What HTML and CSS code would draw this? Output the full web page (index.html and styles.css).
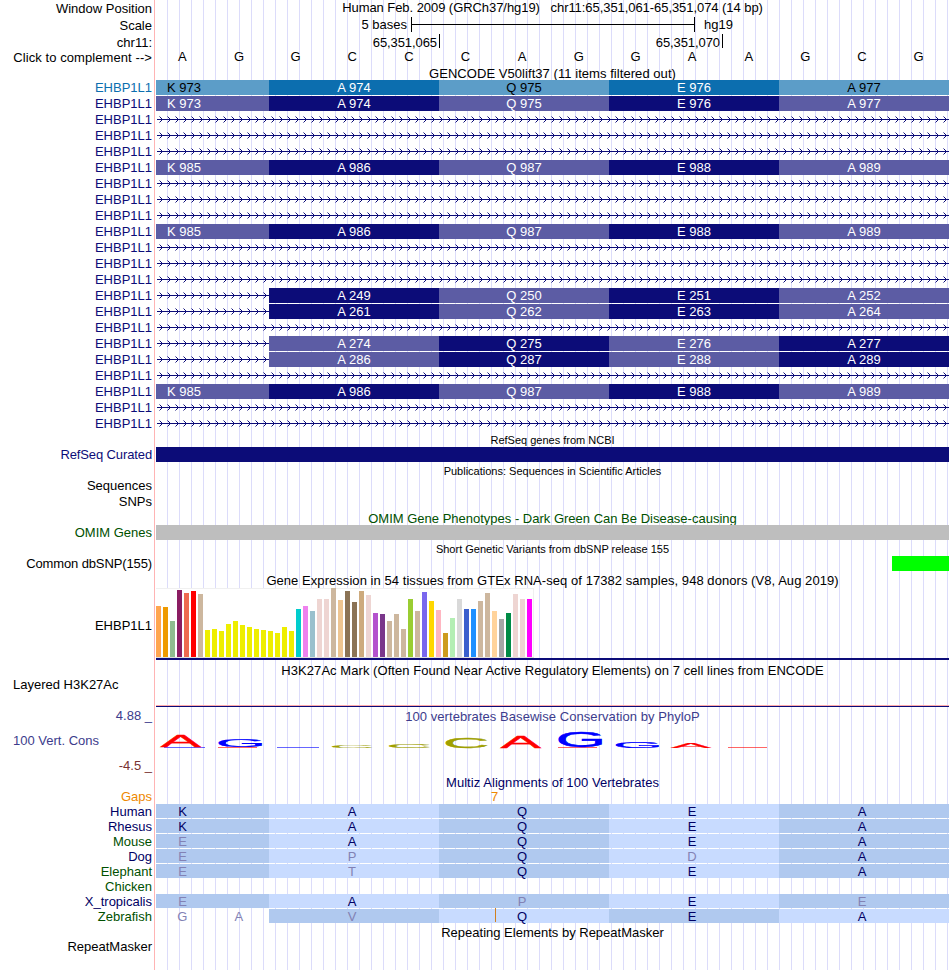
FILE: index.html
```html
<!DOCTYPE html>
<html lang="en">
<head>
<meta charset="utf-8">
<title>Human hg19 chr11:65,351,061-65,351,074</title>
<link rel="stylesheet" href="styles.css">
</head>
<body>
<svg class="defs" width="0" height="0" aria-hidden="true">
  <defs>
    <pattern id="chevrons" x="0" y="0" width="8" height="15" patternUnits="userSpaceOnUse">
      <path class="chev-tip" d="M3 5h1v1h-1zM4 6h1v1h-1zM5 7h1v1h-1zM4 8h1v1h-1zM3 9h1v1h-1z"/>
      <path class="chev-end" d="M2 4h1v1h-1zM2 10h1v1h-1z"/>
    </pattern>
  </defs>
</svg>
<main class="browser">
  <div class="row h17"><div class="label p1">Window Position</div><div class="data title pre tight">Human Feb. 2009 (GRCh37/hg19)   chr11:65,351,061-65,351,074 (14 bp)</div></div>
  <div class="row h16"><div class="label p1">Scale</div><div class="data scale"><span class="scale-left">5 bases</span><span class="scale-bar"></span><span>hg19</span></div></div>
  <div class="row h16"><div class="label p2">chr11:</div><div class="data ticks"><span class="tick">65,351,065</span><span class="tick">65,351,070</span></div></div>
  <div class="row h16"><div class="label p1 loose">Click to complement --&gt;</div><div class="data"><div class="bases" id="bases"></div></div></div>
  <div class="row h15"><div></div><div class="data title p1 wide">GENCODE V50lift37 (11 items filtered out)</div></div>
  <div id="genes"></div>
  <div class="row h15"><div></div><div class="data title small">RefSeq genes from NCBI</div></div>
  <div class="row h16"><div class="label navy snug">RefSeq Curated</div><div class="data"><div class="bar bar-navy"></div></div></div>
  <div class="row h15"><div></div><div class="data title small">Publications: Sequences in Scientific Articles</div></div>
  <div class="row h16"><div class="label">Sequences</div></div>
  <div class="row h16"><div class="label">SNPs</div></div>
  <div class="row h15"><div></div><div class="data title green p1">OMIM Gene Phenotypes - Dark Green Can Be Disease-causing</div></div>
  <div class="row h16"><div class="label green">OMIM Genes</div><div class="data"><div class="bar bar-gray"></div></div></div>
  <div class="row h15"><div></div><div class="data title small">Short Genetic Variants from dbSNP release 155</div></div>
  <div class="row h16"><div class="label snug">Common dbSNP(155)</div><div class="data"><div class="bar bar-snp"></div></div></div>
  <div class="row h16"><div></div><div class="data title p1 wide">Gene Expression in 54 tissues from GTEx RNA-seq of 17382 samples, 948 donors (V8, Aug 2019)</div></div>
  <div class="row gtex-row"><div class="label gtex-label">EHBP1L1</div><div class="data gtex"><div class="gtex-box" id="gtex"></div></div></div>
  <div class="row h17"><div></div><div class="data title p3 wide">H3K27Ac Mark (Often Found Near Active Regulatory Elements) on 7 cell lines from ENCODE</div></div>
  <div class="row h30"><div class="label label-left">Layered H3K27Ac</div><div class="data mark-line"></div></div>
  <div class="row h17"><div class="label blue p1">4.88 _</div><div class="data title blue p2 wide">100 vertebrates Basewise Conservation by PhyloP</div></div>
  <div class="row h51">
    <div class="cons-labels"><div class="label label-left blue">100 Vert. Cons</div><div class="label brown">-4.5 _</div></div>
    <div class="data"><svg class="logo" id="logo" width="793" height="51" viewBox="156 724 793 51"></svg></div>
  </div>
  <div class="row h14"><div></div><div class="data title midnight wide">Multiz Alignments of 100 Vertebrates</div></div>
  <div class="row h15"><div class="label orange">Gaps</div><div class="data gap-count orange">7</div></div>
  <div id="alignments"></div>
  <div class="row h15"><div></div><div class="data title p1">Repeating Elements by RepeatMasker</div></div>
  <div class="row h31"><div class="label">RepeatMasker</div></div>
</main>
<script src="main.js"></script>
</body>
</html>
```
FILE: styles.css
```css
body {
  margin: 0;
  background: #fff;
  color: #000;
  font: 13px/15px "Liberation Sans", Arial, Helvetica, sans-serif;
}

.defs { position: absolute; }

.browser {
  width: 949px;
  height: 970px;
  overflow: hidden;
  background:
    linear-gradient(#ffb4b4, #ffb4b4) 154px 0 / 1px 100% no-repeat,
    repeating-linear-gradient(90deg, transparent 0 11px, #dcdcfa 11px 12px) 156px 0 / 793px 100% no-repeat;
}

.row {
  display: grid;
  grid-template-columns: 154px 793px;
  column-gap: 2px;
  white-space: nowrap;
}
.h14 { height: 14px; }
.h15 { height: 15px; }
.h16 { height: 16px; }
.h17 { height: 17px; }
.h30 { height: 30px; }
.h31 { height: 31px; }
.h51 { height: 51px; }

.p1 { padding-top: 1px; }
.p2 { padding-top: 2px; }
.p3 { padding-top: 3px; }

.label { padding-right: 2px; text-align: right; }
.label-left { padding-left: 13px; text-align: left; }
.title { text-align: center; }
.small { padding-top: 1px; font-size: 11px; }
.pre { white-space: pre; }
.tight { letter-spacing: -0.06px; }
.snug { letter-spacing: -0.12px; }
.wide { letter-spacing: 0.055px; }
.loose { letter-spacing: 0.08px; }

.navy { color: #0c0c78; }
.sky { color: #0c6eaf; }
.green { color: #005000; }
.blue { color: #3c3c8c; }
.brown { color: #783232; }
.midnight { color: #000064; }
.orange { color: #ee8800; }
.faded { color: #8282b4; }

/* Ruler */
.scale { display: flex; }
.scale-left { width: 251px; margin-right: 4px; text-align: right; }
.scale-bar {
  width: 282px;
  height: 15px;
  margin-right: 9px;
  border: solid #000;
  border-width: 0 1px;
  background: linear-gradient(#000, #000) 0 7px / 100% 1px no-repeat;
}
.ticks { display: flex; padding-top: 1px; }
.tick {
  box-sizing: border-box;
  width: 283px;
  height: 14px;
  padding: 1px 2px 0 0;
  border-right: 1px solid #000;
  text-align: right;
  letter-spacing: -0.08px;
}
.tick:first-child { width: 284px; }

.bases {
  display: grid;
  grid-template-columns: repeat(14, 1fr);
  margin-left: -2px;
  margin-right: 2px;
  text-align: center;
}

/* Gene models */
.gene { display: flex; height: 15px; }
.codon { flex: 0 0 170px; text-align: center; }
.codon:first-child { flex-basis: 113px; text-indent: -57px; }
.codon-dark { background: #0c0c78; color: #fff; }
.codon-light { background: #5c5ca4; color: #fff; }
.codon-sky-dark { background: #0c6eaf; color: #fff; }
.codon-sky-light { background: #5c9dc8; color: #000; }
.intron { display: block; flex: none; margin-left: 1px; }
.intron-line { fill: #0c0c78; }
.chev-tip { fill: #0c0c78; }
.chev-end { fill: #0c0c78; opacity: 0.5; }

/* Solid items */
.bar { height: 15px; }
.bar-navy { background: #0c0c78; }
.bar-gray { background: #bebebe; }
.bar-snp { width: 57px; margin-left: auto; background: #0f0; }

/* Expression chart */
.gtex-row { height: 72px; }
.gtex-label { padding-top: 30px; }
.gtex { border-bottom: 2px solid #0c0c78; }
.gtex-box {
  display: flex;
  align-items: flex-end;
  gap: 2px;
  width: 378px;
  height: 70px;
  box-sizing: border-box;
  border-bottom: 1px solid #dcdcdc;
  background:
    linear-gradient(#f0f0f0, #f0f0f0) 0 0 / 100% 1px no-repeat,
    linear-gradient(#f0f0f0, #f0f0f0) 100% 0 / 1px 100% no-repeat,
    #fff;
}
.tissue { flex: 0 0 5px; }

.mark-line {
  box-sizing: border-box;
  border-bottom: 1px solid #0c0c78;
  background: linear-gradient(#ffaaaa, #ffaaaa) 0 100% / 100% 1px no-repeat;
}

/* Conservation */
.cons-labels { display: flex; flex-direction: column; gap: 10px; padding-top: 9px; }
.logo { display: block; }
.logo text {
  font: 10px "Liberation Sans", Arial, sans-serif;
  stroke-width: 0.2;
}
.base-a { fill: #f00; stroke: #f00; }
.base-g { fill: #00f; stroke: #00f; }
.base-c { fill: #a0a000; stroke: #a0a000; }
.sliver { stroke: none; opacity: 0.6; }
.gap-count { padding-left: 335px; }

/* Alignments */
.align { position: relative; display: flex; height: 14px; }
.residue { flex: 0 0 170px; box-sizing: border-box; padding-right: 4px; text-align: center; }
.residue-first { flex-basis: 113px; text-indent: -56px; }
.residue-base { flex: 0 0 56.5px; box-sizing: border-box; padding-right: 4px; text-align: center; }
.deep { background: #b0c9ef; }
.pale { background: #c8dbff; }
.insert {
  position: absolute;
  left: 339px;
  top: -1px;
  width: 1px;
  height: 14px;
  background: #d08020;
}
```
FILE: main.js
```javascript
const byId = (id) => document.getElementById(id);

byId("bases").innerHTML = [..."AGGCCCAGGAAGCG"].map((b) => `<span>${b}</span>`).join("");

// Each gene is either an intron ("-") or a first codon number; "half" genes
// begin at the second codon.
const residues = ["K", "A", "Q", "E", "A"];
const genes = [
  { start: 973, sky: true }, { start: 973 }, "-", "-", "-", { start: 985 },
  "-", "-", "-", { start: 985 }, "-", "-", "-",
  { start: 248, half: true }, { start: 260, half: true }, "-",
  { start: 273, half: true, flip: true }, { start: 285, half: true, flip: true },
  "-", { start: 985 }, "-", "-",
];

function intron(width) {
  return `<svg class="intron" width="${width}" height="15">` +
    `<rect class="intron-line" y="7" width="${width}" height="1"/>` +
    `<rect width="${width}" height="15" fill="url(#chevrons)"/></svg>`;
}

byId("genes").innerHTML = genes.map((g) => {
  let body;
  if (g === "-") {
    body = intron(792);
  } else {
    body = residues.map((r, i) => {
      if (g.half && i === 0) return intron(112);
      const dark = (i % 2 === 1) !== Boolean(g.flip);
      const cls = `codon-${g.sky ? "sky-" : ""}${dark ? "dark" : "light"}`;
      return `<span class="codon ${cls}">${r} ${g.start + i}</span>`;
    }).join("");
  }
  return `<div class="row h16"><div class="label ${g.sky ? "sky" : "navy"}">EHBP1L1</div>` +
    `<div class="data gene">${body}</div></div>`;
}).join("");

const tissues = [
  [51, "#ffa54f"], [50, "#ee9a00"], [36, "#8fbc8f"], [67, "#8b1c62"], [64, "#ee6a50"], [66, "#ff0000"],
  [63, "#cdb79e"], [27, "#eeee00"], [28, "#eeee00"], [26, "#eeee00"], [33, "#eeee00"], [36, "#eeee00"],
  [32, "#eeee00"], [30, "#eeee00"], [28, "#eeee00"], [27, "#eeee00"], [26, "#eeee00"], [24, "#eeee00"],
  [30, "#eeee00"], [26, "#eeee00"], [48, "#00cdcd"], [51, "#ee82ee"], [46, "#9ac0cd"], [58, "#eed5d2"],
  [58, "#eed5d2"], [69, "#cdb79e"], [57, "#eec591"], [66, "#8b7355"], [55, "#8b7355"], [66, "#cdaa7d"],
  [62, "#eed5d2"], [44, "#b452cd"], [43, "#7a378b"], [36, "#cdb79e"], [43, "#cdb79e"], [28, "#cdb79e"],
  [58, "#9acd32"], [46, "#cdb79e"], [65, "#7a67ee"], [56, "#ffd700"], [47, "#ffb6c1"], [24, "#cd9b1d"],
  [39, "#b4eeb4"], [58, "#d9d9d9"], [48, "#3a5fcd"], [48, "#1e90ff"], [56, "#cdb79e"], [64, "#cdb79e"],
  [46, "#ffd39b"], [38, "#a6a6a6"], [44, "#008b45"], [63, "#eed5d2"], [58, "#eed5d2"], [58, "#ff00ff"],
];
byId("gtex").innerHTML = tissues
  .map(([h, c]) => `<span class="tissue" style="height:${h}px;background:${c}"></span>`).join("");

// Glyph boxes of the 10px capitals: left bearing, ink width, ink height.
const glyphs = { A: [0, 6.67, 6.95], G: [0.45, 6.7, 7.2], C: [0.45, 6.4, 7.2] };
// letter, left, right, top, bottom
const stacks = [
  ["A", 160.5, 201, 736, 747], ["G", 218.7, 262, 739, 747],
  ["C", 332, 372, 745, 748], ["C", 389, 429.5, 744, 748], ["C", 446, 487, 738, 748],
  ["A", 500.5, 541, 737, 748], ["G", 558.7, 602, 731, 747], ["G", 616, 659, 742, 748],
  ["A", 671, 711, 743, 748],
];
// Bases with almost no score are drawn as slivers on the axis.
const slivers = [
  ["g", 164, 205], ["a", 218, 257], ["g", 277, 319], ["a", 558, 597], ["a", 728, 767],
];
byId("logo").innerHTML = slivers
  .map(([b, l, r]) => `<rect class="base-${b} sliver" x="${l}" y="747" width="${r - l}" height="1"/>`)
  .join("") + stacks.map(([b, l, r, t, bot]) => {
  const [bearing, w, h] = glyphs[b];
  const sx = (r - l) / w;
  const sy = (bot - t) / h;
  const drop = b === "A" ? 0 : 0.1 * sy;
  return `<text class="base-${b.toLowerCase()}" transform="translate(${l - bearing * sx} ${bot - drop}) scale(${sx} ${sy})">${b}</text>`;
}).join("");

// Lower case residues differ from the human sequence.
const species = [
  ["Human", "midnight", "KAQEA"], ["Rhesus", "midnight", "KAQEA"], ["Mouse", "green", "eAQEA"],
  ["Dog", "midnight", "epQdA"], ["Elephant", "green", "etQEA"], ["Chicken", "green", ""],
  ["X_tropicalis", "midnight", "eApEe"], ["Zebrafish", "green", "-vQEA"],
];
byId("alignments").innerHTML = species.map(([name, color, seq]) => {
  const shifted = seq[0] === "-";
  const cells = [...seq].map((r, i) => {
    if (r === "-") {
      return `<span class="residue-base faded">G</span><span class="residue-base faded">A</span>`;
    }
    const tone = (i % 2 === 0) !== shifted ? "deep" : "pale";
    const ink = r === r.toLowerCase() ? "faded" : "midnight";
    return `<span class="residue ${i ? "" : "residue-first"} ${tone} ${ink}">${r.toUpperCase()}</span>`;
  }).join("");
  return `<div class="row h15"><div class="label ${color}">${name}</div>` +
    `<div class="data align">${cells}${shifted ? '<i class="insert"></i>' : ""}</div></div>`;
}).join("");
```
